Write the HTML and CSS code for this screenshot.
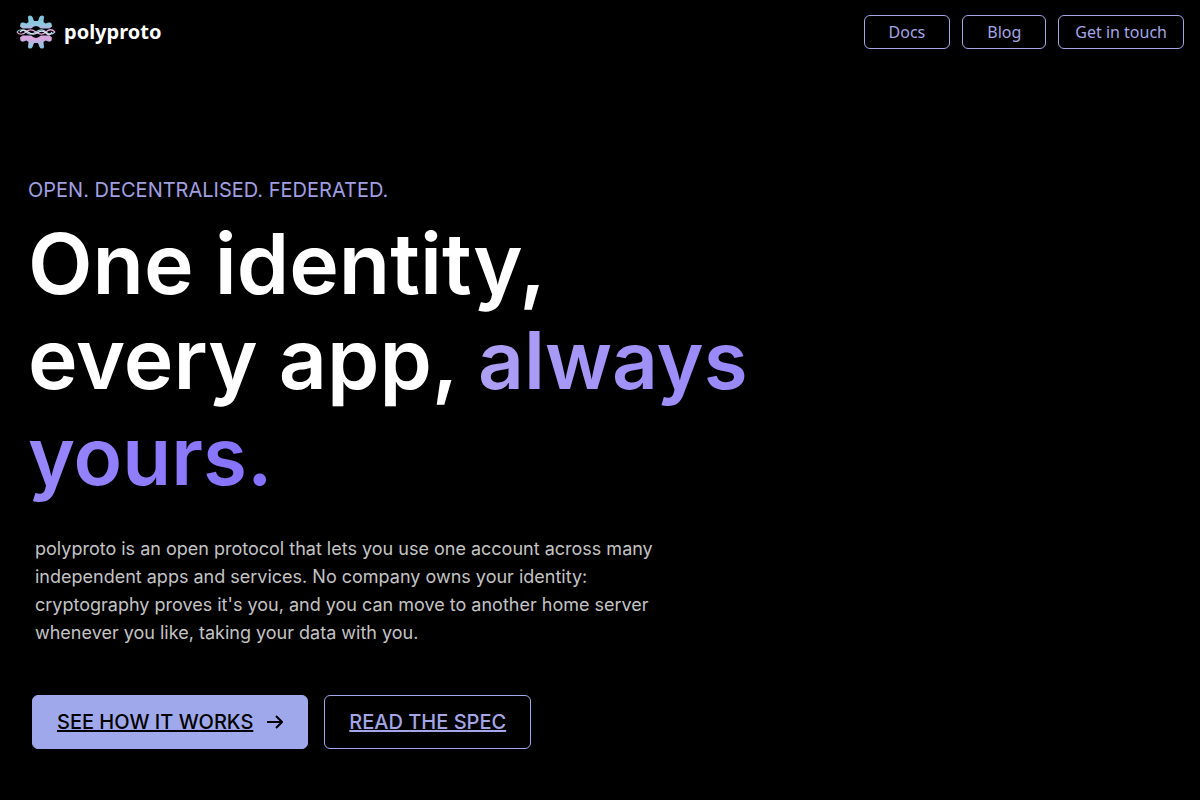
FILE: index.html
```html
<!DOCTYPE html>
<html lang="en">
<head>
<meta charset="utf-8">
<meta name="viewport" content="width=device-width, initial-scale=1">
<title>polyproto</title>
<link rel="stylesheet" href="styles.css">
</head>
<body>
<header class="site-header">
  <a class="brand" href="#">
    <svg class="brand-logo" viewBox="0 0 40 34" aria-hidden="true">
      <defs>
        <linearGradient id="gear" gradientUnits="userSpaceOnUse" x1="0" y1="0" x2="0" y2="34">
          <stop offset="0" stop-color="#7cc4dc"/>
          <stop offset=".28" stop-color="#8fc8e0"/>
          <stop offset=".4" stop-color="#b9b4e0"/>
          <stop offset=".7" stop-color="#dca4de"/>
          <stop offset=".84" stop-color="#a8bce2"/>
          <stop offset="1" stop-color="#7cc8de"/>
        </linearGradient>
      </defs>
      <path fill="url(#gear)" d="M12 2q0-1.500 2-1.500t2.500 1.500l1.500 4h4l1.500-4q.5-1.500 2.500-1.500t2 1.500l-.5 5 2 1.500 3-1q2-.5 3 1l.5 3-2.500 2H6.500L4 11.500l.5-3q1-1.500 3-1l3 1 2-1.500zM12 32q0 1.500 2 1.500t2.500-1.500l1.500-4h4l1.500 4q.5 1.500 2.500 1.500t2-1.500l-.5-5 2-1.500 3 1q2 .5 3-1l.5-3-2.500-2H6.500L4 22.500l.5 3q1 1.500 3 1l3-1 2 1.500z"/>
      <path fill="#000" d="M15 14q2-3 5-3t5 3zM15 20q2 3 5 3t5-3z"/>
      <g fill="none" stroke-width="1.200">
        <path stroke="#8fcbe2" d="M1 17c2-3 6-3 9 0s6 3 10 0 7-3 10 0 6 3 9 0"/>
        <path stroke="#e7a6de" d="M1 17c2 3 6 3 9 0s6-3 10 0 7 3 10 0 6-3 9 0"/>
        <path stroke="#e8e6f4" d="M4 17c3-3 5-2 8 0s6 3 9 1 6-3 9 0 4 2 6-1"/>
      </g>
    </svg>
    <span>polyproto</span>
  </a>
  <nav class="site-nav" aria-label="Main">
    <a class="nav-link nav-link-wide" href="#">Docs</a>
    <a class="nav-link nav-link-wide" href="#">Blog</a>
    <a class="nav-link" href="#">Get in touch</a>
  </nav>
</header>
<main class="hero">
  <p class="eyebrow">OPEN. DECENTRALISED. FEDERATED.</p>
  <h1 class="headline">One identity,<br>every app, <span class="accent">always yours.</span></h1>
  <p class="lead">polyproto is an open protocol that lets you use one account across many independent apps and services. No company owns your identity: cryptography proves it's you, and you can move to another home server whenever you like, taking your data with you.</p>
  <div class="actions">
    <a class="action action-primary" href="#how"><span class="action-label">SEE HOW IT WORKS</span>
      <svg class="arrow" viewBox="0 0 16 14" aria-hidden="true"><path d="M0 7h14M9 1l6 6-6 6"/></svg>
    </a>
    <a class="action" href="#spec"><span class="action-label">READ THE SPEC</span></a>
  </div>
</main>
</body>
</html>
```
FILE: styles.css
```css
* {
  box-sizing: border-box;
}

body {
  margin: 0;
  background: #000;
  color: #fff;
  font-family: "Noto Sans", sans-serif;
}

.site-header {
  display: flex;
  align-items: center;
  justify-content: space-between;
  height: 64px;
  padding: 0 16px;
}

.brand {
  display: flex;
  align-items: center;
  gap: 8px;
  color: #fff;
  font-size: 20px;
  font-weight: 700;
  line-height: 28px;
  text-decoration: none;
}

.brand-logo {
  width: 40px;
  height: 34px;
}

.site-nav {
  display: flex;
  gap: 12px;
}

.nav-link {
  padding: 0 16px;
  border: 1px solid #a5a6e6;
  border-radius: 6px;
  color: #a5a6e6;
  font-size: 16px;
  line-height: 32px;
  text-decoration: none;
}

.nav-link-wide {
  padding: 0 24px;
}

.hero {
  padding: 112px 28px 48px;
  font-family: Inter, sans-serif;
}

.eyebrow {
  margin: 0;
  color: #a09fe2;
  font-size: 20px;
  line-height: 28px;
}

.headline {
  max-width: 760px;
  margin: 12px 0 0;
  font-size: 84px;
  font-weight: 600;
  line-height: 95px;
}

.accent {
  background: linear-gradient(90deg, #ada0f4, #8470ff);
  background-clip: text;
  -webkit-background-clip: text;
  color: transparent;
  font-size: 80px;
}

.lead {
  max-width: 656px;
  margin: 32px 0 0;
  padding-left: 7px;
  color: #c4c4c4;
  font-size: 18px;
  line-height: 28px;
}

.actions {
  display: flex;
  gap: 16px;
  margin: 48px 4px 0;
}

.action {
  display: flex;
  align-items: center;
  gap: 14px;
  padding: 0 24px;
  border: 1px solid #a0a8ec;
  border-radius: 6px;
  color: #a5a6e6;
  font-size: 20px;
  font-weight: 500;
  line-height: 52px;
}

.action-primary {
  background: #a0a8ec;
  color: #000;
}

.arrow {
  width: 16px;
  height: 14px;
  fill: none;
  stroke: currentColor;
  stroke-width: 2;
}
```
